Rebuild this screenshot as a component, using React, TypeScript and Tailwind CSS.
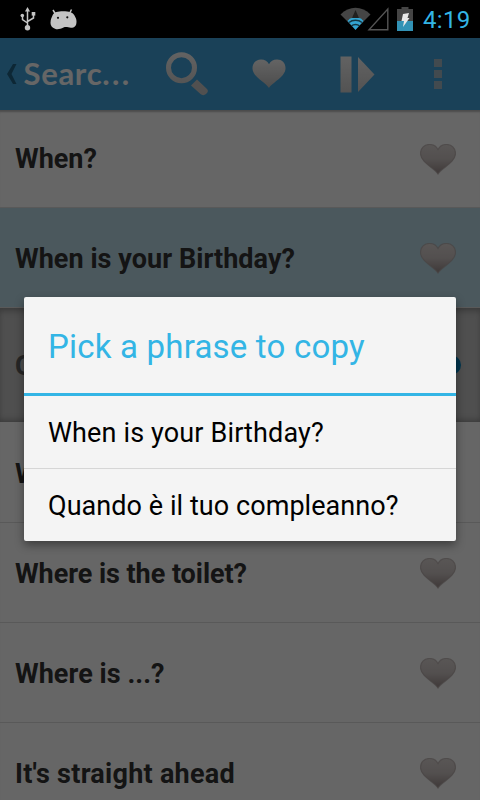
import { Fragment } from "react";

const phrases = [
  { id: 1, text: "When?", height: "h-[98px]", textClass: "pt-[2px]" },
  { id: 2, text: "When is your Birthday?", height: "h-[100px]", textClass: "pt-[3px] tracking-[0.050px]", selected: true },
  { id: 3, text: "Where?", height: "h-[101px]", textClass: "pt-[4px]" },
  { id: 4, text: "Where is the toilet?", height: "h-[100px]", textClass: "pt-[4px] tracking-[-0.050px]" },
  { id: 5, text: "Where is ...?", height: "h-[100px]", textClass: "pt-[4px] tracking-[0.050px]" },
  { id: 6, text: "It's straight ahead", height: "h-[100px]", textClass: "pt-[4px] tracking-[0.260px]" },
];

const HEART = "M18 30C15 24.500 0.500 18.500 0.500 9.500C0.500 4 4.500 0.500 9.500 0.500C13.500 0.500 16.500 2.500 18 5.500C19.500 2.500 22.500 0.500 26.500 0.500C31.500 0.500 35.500 4 35.500 9.500C35.500 18.500 21 24.500 18 30Z";

function RowHeart() {
  return (
    <svg className="w-[36px] h-[31px] mt-[2px]" viewBox="0 0 36 31">
      <defs>
        <linearGradient id="rowHeart" x1="0" y1="0" x2="0" y2="1">
          <stop offset="0" stopColor="#dfd8d6" />
          <stop offset="0.5" stopColor="#cfc6c5" />
          <stop offset="1" stopColor="#9c8e8d" />
        </linearGradient>
      </defs>
      <path d={HEART} fill="url(#rowHeart)" stroke="#b5a9a8" strokeOpacity="0.700" strokeWidth="1.200" />
    </svg>
  );
}

function StatusBar() {
  return (
    <div className="h-[38px] bg-black flex items-center shrink-0">
      {/* USB */}
      <svg className="w-4 h-6 ml-5" viewBox="0 0 16 24" fill="#c4c4c4" stroke="#c4c4c4">
        <path d="M7.500 4V20M2.500 9V12.500L7.500 16M13.500 8V11L7.500 14.500" fill="none" strokeWidth="1.500" />
        <path d="M7.500 0L10 4.500H5Z" stroke="none" />
        <circle cx="2.300" cy="8.500" r="1.800" stroke="none" />
        <rect x="11.700" y="5" width="3.600" height="3.600" stroke="none" />
        <circle cx="7.500" cy="20.800" r="2.700" stroke="none" />
      </svg>
      {/* Debug head */}
      <svg className="w-[27px] h-[21px] ml-[13.500px]" viewBox="0 0 27 21">
        <path d="M3 1L5.500 5M21.500 .5L19.500 4.500" stroke="#c4c4c4" strokeWidth="1.500" />
        <path d="M.5 14C.5 10 2 8 2.500 6.500C4 3 8 2.300 13 2.300C19 2.300 23 3.500 24.500 6.500C25.500 8.500 26.500 10 26.500 12.500C26.500 17 24.500 18.800 21 18.800C18 18.600 16 17.500 13.500 18.600C10.500 20.300 7 20.800 5 19.800C2 18.700 .5 16.500 .5 14Z" fill="#c4c4c4" />
        <circle cx="8" cy="8.800" r="1.100" fill="#111" />
        <circle cx="17.300" cy="8.300" r="1.100" fill="#111" />
      </svg>

      <div className="ml-auto flex items-center">
        {/* Wifi */}
        <svg className="w-[31px] h-6 -mt-[1px]" viewBox="0 0 31 24">
          <path d="M0.500 7.500C9 -1.500 22 -1.500 30.500 7.500L15.500 22.500Z" fill="#454545" />
          <path d="M7.500 14L10 11.500C13 10 18 10 21 11.500L23.500 14L15.500 23Z" fill="#33a5d2" />
          <path d="M9 15.500C12.500 12.500 18.500 12.500 22 15.500M11.500 19C13.500 17 17.500 17 19.500 19" fill="none" stroke="#153743" strokeWidth="1.500" />
          <path d="M15.500 3L19 11H12Z" fill="#202020" />
        </svg>
        {/* Signal */}
        <svg className="w-[22px] h-6 -ml-1" viewBox="0 0 22 24">
          <path d="M2 22.800H20.800V2Z" fill="none" stroke="#555" strokeWidth="1.400" />
        </svg>
        {/* Battery */}
        <svg className="w-4 h-6 ml-[8.500px] -mt-[1px]" viewBox="0 0 16 24">
          <path d="M4.500 0H11.500V2H16V24H0V2H4.500Z" fill="#454545" />
          <rect y="14" width="16" height="10" fill="#3292b5" />
          <path d="M6 7L12 6L10.500 11H12.500L6 20L7 14H4.500Z" fill="#e8e8e8" />
        </svg>
        <span className="ml-[10px] mr-[10px] w-[47px] text-[24px] leading-[38px] pt-[1px] tracking-[0.350px] text-[#33b5e5] whitespace-nowrap">4:19</span>
      </div>
    </div>
  );
}

function ActionBar() {
  return (
    <header className="h-[72px] bg-[#42a4dc] flex items-center shrink-0">
      <svg className="w-[10px] h-[20px] ml-[7px]" viewBox="0 0 10 20">
        <path d="M6 0H9.500L4.500 10L9.500 20H6L0 10Z" fill="#226386" />
      </svg>
      <h1 className="ml-[6.500px] w-[112px] font-['Lato'] font-bold text-[31px] leading-[70px] pb-[2px] tracking-[0.700px] text-white whitespace-nowrap">
        Searc<span className="tracking-[2.300px]">...</span>
      </h1>
      <svg className="w-[44px] h-[46px] ml-[29.500px]" viewBox="0 0 44 46">
        <defs>
          <linearGradient id="tool" x1="0" y1="0" x2="0" y2="46" gradientUnits="userSpaceOnUse">
            <stop offset="0" stopColor="#f8f8f8" />
            <stop offset="1" stopColor="#c4c4c4" />
          </linearGradient>
        </defs>
        <circle cx="16.500" cy="16.700" r="13" fill="none" stroke="url(#tool)" strokeWidth="5" />
        <path d="M32 28.500L42 38C43.500 39.500 43 41.500 41 43C39.500 44.500 37 44.500 35.500 43L26 34.500Z" fill="#cbc9c7" />
      </svg>
      <svg className="w-[34px] h-[30px] ml-[43px] -mt-[1px]" viewBox="0 0 36 31" preserveAspectRatio="none">
        <defs>
          <linearGradient id="barHeart" x1="0" y1="0" x2="0" y2="1">
            <stop offset="0" stopColor="#fafafa" />
            <stop offset="1" stopColor="#bebebe" />
          </linearGradient>
        </defs>
        <path d={HEART} fill="url(#barHeart)" />
      </svg>
      <svg className="w-[35px] h-[37px] ml-[53.500px]" viewBox="0 0 35 37">
        <defs>
          <linearGradient id="play" x1="0" y1="0" x2="0" y2="1">
            <stop offset="0" stopColor="#f5f5f5" />
            <stop offset="1" stopColor="#cfcfcf" />
          </linearGradient>
        </defs>
        <rect x="0.500" y="0.500" width="11" height="36" fill="url(#play)" />
        <path d="M18 1V36L34.500 18.500Z" fill="url(#play)" />
      </svg>
      <div className="ml-[59px] flex flex-col gap-[3px]">
        <span className="w-2 h-2 bg-[#a6b8c6]" />
        <span className="w-2 h-2 bg-[#a6b8c6]" />
        <span className="w-2 h-2 bg-[#a6b8c6]" />
      </div>
    </header>
  );
}

function Translation() {
  return (
    <div className="h-[114px] px-[15px] bg-[#c6c6c6] flex items-center justify-between shadow-[inset_0_5px_6px_-2px_#909090,inset_0_-5px_6px_-3px_#909090]">
      <span className="pt-[3px] text-[27px] font-bold text-[#606060]">Q</span>
      <span className="w-5 h-5 mr-[4px] rounded-full bg-[#0084c4]" />
    </div>
  );
}

function PickPhraseDialog() {
  return (
    <div className="w-[432px] h-[244px] bg-[#f4f4f4] rounded-[2px] overflow-hidden shadow-[0_4px_10px_rgba(0,0,0,0.400)] flex flex-col">
      <h2 className="h-[99px] px-6 border-b-[3px] border-[#33b5e5] text-[33px] leading-[100px] tracking-[0.200px] text-[#33b5e5] whitespace-nowrap">Pick a phrase to copy</h2>
      <button className="h-[73px] px-6 pt-[2px] border-b border-[#d6d6d6] text-left text-[27px] tracking-[0.140px] text-black whitespace-nowrap">When is your Birthday?</button>
      <button className="h-[72px] px-6 pt-[2px] text-left text-[27px] tracking-[0.060px] text-black whitespace-nowrap">Quando è il tuo compleanno?</button>
    </div>
  );
}

export default function App() {
  return (
    <div className="relative w-[480px] h-[800px] overflow-hidden flex flex-col bg-white font-['Roboto',sans-serif]">
      <StatusBar />
      <ActionBar />
      <main className="flex-1 overflow-hidden shadow-[inset_0_3px_2px_-1px_#bbbbbb]">
        {phrases.map((p) => (
          <Fragment key={p.id}>
            <div
              className={`${p.height} pl-[15px] pr-6 flex items-center justify-between border-b border-[#dedede] ${
                p.selected ? "bg-[#bbdbe8]" : ""
              }`}
            >
              <span className={`text-[27px] font-bold text-[#333333] whitespace-nowrap ${p.textClass}`}>{p.text}</span>
              <RowHeart />
            </div>
            {p.selected && <Translation />}
          </Fragment>
        ))}
      </main>

      {/* Dimmed backdrop under the status bar */}
      <div className="absolute inset-x-0 top-[38px] bottom-0 bg-black/60 flex justify-center items-center">
        <PickPhraseDialog />
      </div>
    </div>
  );
}
